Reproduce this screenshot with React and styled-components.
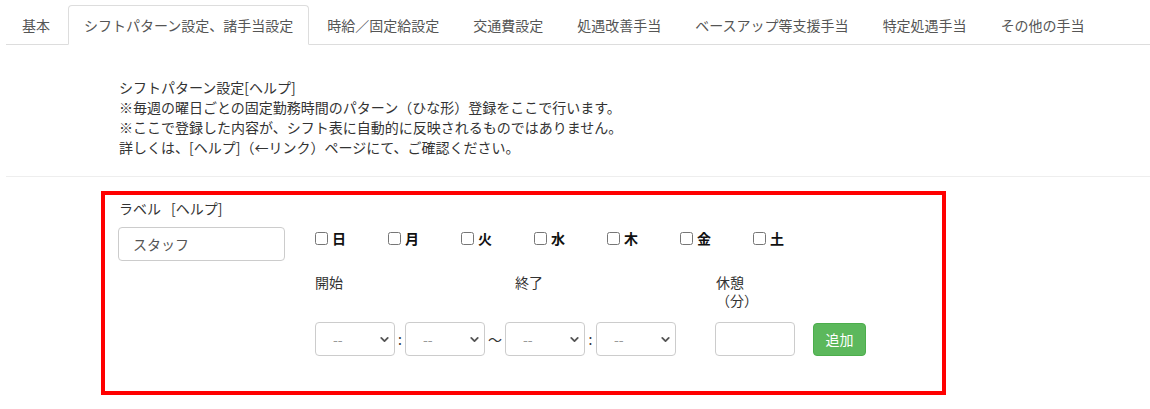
import React from "react";
import styled, { createGlobalStyle } from "styled-components";
import { ChevronDown } from "lucide-react";

const GlobalStyle = createGlobalStyle`
  body {
    margin: 0;
    background: #fff;
    color: #333;
    font-family: "Noto Sans CJK JP", "Noto Sans", sans-serif;
    font-size: 14px;
    line-height: 20px;
  }
`;

const TABS = [
  "基本",
  "シフトパターン設定、諸手当設定",
  "時給／固定給設定",
  "交通費設定",
  "処遇改善手当",
  "ベースアップ等支援手当",
  "特定処遇手当",
  "その他の手当",
];

const DAYS = ["日", "月", "火", "水", "木", "金", "土"];

export default function App() {
  return (
    <Page>
      <GlobalStyle />
      <TabBar>
        {TABS.map((t, i) => (
          <Tab key={t} active={i === 1}>
            {t}
          </Tab>
        ))}
      </TabBar>

      <Intro>
        <div>シフトパターン設定[ヘルプ]</div>
        <div>※毎週の曜日ごとの固定勤務時間のパターン（ひな形）登録をここで行います。</div>
        <div>※ここで登録した内容が、シフト表に自動的に反映されるものではありません。</div>
        <div>詳しくは、[ヘルプ]（←リンク）ページにて、ご確認ください。</div>
      </Intro>
      <Divider />

      <PatternBox>
        <LabelColumn>
          <FieldLabel>
            ラベル<HelpLink>[ヘルプ]</HelpLink>
          </FieldLabel>
          <TextInput defaultValue="スタッフ" width={167} />
        </LabelColumn>

        <MainColumn>
          <DayRow>
            {DAYS.map((d) => (
              <DayItem key={d}>
                <input type="checkbox" />
                <span>{d}</span>
              </DayItem>
            ))}
          </DayRow>

          <HeadRow>
            <div>開始</div>
            <div>終了</div>
            <div>
              休憩
              <br />
              （分）
            </div>
          </HeadRow>

          <ControlRow>
            <TimeSelect />
            <Sep width={10}>:</Sep>
            <TimeSelect />
            <Sep width={20}>〜</Sep>
            <TimeSelect />
            <Sep width={11}>:</Sep>
            <TimeSelect />
            <BreakInput width={80} />
            <AddButton>追加</AddButton>
          </ControlRow>
        </MainColumn>
      </PatternBox>
    </Page>
  );
}

function TimeSelect() {
  return (
    <SelectWrap>
      <Select defaultValue="">
        <option value="">--</option>
      </Select>
      <Arrow>
        <ChevronDown size={13} strokeWidth={3.4} />
      </Arrow>
    </SelectWrap>
  );
}

const Page = styled.div`
  padding-left: 6px;
  width: 1144px;
`;

const TabBar = styled.ul`
  display: flex;
  margin: 5px 0 0;
  padding: 0;
  list-style: none;
  border-bottom: 1px solid #ddd;
`;

const Tab = styled.li`
  margin: 0 2px -1px 0;
  padding: 9px 15px;
  line-height: 20px;
  color: #555;
  white-space: nowrap;
  border: 1px solid ${(p) => (p.active ? "#ddd" : "transparent")};
  border-bottom-color: ${(p) => (p.active ? "#fff" : "transparent")};
  border-radius: 4px 4px 0 0;
  background: ${(p) => (p.active ? "#fff" : "transparent")};
`;

const Intro = styled.div`
  padding: 32px 0 0 113px;
  color: #333;
`;

const Divider = styled.hr`
  margin: 19px 0 0;
  border: 0;
  border-top: 1px solid #eee;
`;

const PatternBox = styled.div`
  margin: 14px 0 0 95px;
  width: 845px;
  height: 204px;
  box-sizing: border-box;
  border: 4px solid #f00;
  padding: 3px 0 0 13px;
  display: flex;
  gap: 30px;
`;

const LabelColumn = styled.div`
  display: flex;
  flex-direction: column;
  gap: 9px;
`;

const FieldLabel = styled.div`
  padding-left: 1px;
  color: #333;
`;

const HelpLink = styled.span`
  margin-left: 10px;
`;

const TextInput = styled.input`
  box-sizing: border-box;
  width: ${(p) => p.width}px;
  height: 34px;
  padding: 6px 14px;
  border: 1px solid #ccc;
  border-radius: 4px;
  font: inherit;
  color: #555;
  outline: none;
`;

const BreakInput = styled(TextInput)`
  margin-left: 39px;
`;

const MainColumn = styled.div`
  padding-top: 30px;
  display: flex;
  flex-direction: column;
`;

const DayRow = styled.div`
  display: flex;
`;

const DayItem = styled.label`
  width: 73px;
  display: flex;
  align-items: center;
  gap: 4px;
  font-weight: bold;
  color: #111;

  input {
    margin: 0;
    width: 13px;
    height: 13px;
  }
`;

const HeadRow = styled.div`
  margin-top: 25px;
  display: grid;
  grid-template-columns: 200px 201px auto;
  line-height: 18px;
  color: #333;
`;

const ControlRow = styled.div`
  margin-top: 13px;
  display: flex;
  align-items: center;
`;

const SelectWrap = styled.div`
  position: relative;
  width: 80px;
  height: 34px;
`;

const Select = styled.select`
  appearance: none;
  box-sizing: border-box;
  width: 100%;
  height: 100%;
  padding: 0 0 0 17px;
  border: 1px solid #ccc;
  border-radius: 4px;
  background: #fff;
  font: inherit;
  color: #999;
  outline: none;
`;

const Arrow = styled.span`
  position: absolute;
  right: 4px;
  top: 11px;
  color: #555;
  pointer-events: none;
  line-height: 0;
`;

const Sep = styled.span`
  width: ${(p) => p.width}px;
  text-align: center;
  color: #333;
  font-size: 14px;
`;

const AddButton = styled.button`
  margin-left: 18px;
  width: 53px;
  height: 33px;
  border: 1px solid #4cae4c;
  border-radius: 4px;
  background: #5cb85c;
  color: #fff;
  font: inherit;
  padding: 0;
`;
